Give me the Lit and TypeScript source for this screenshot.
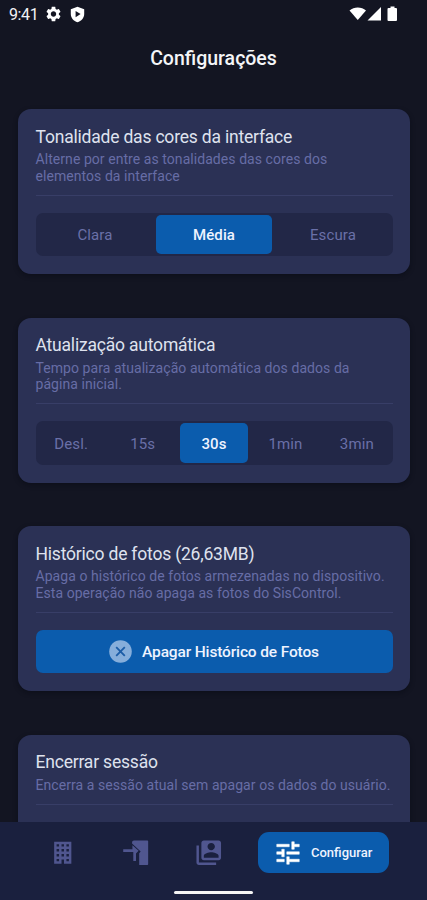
import { LitElement, html, css } from "lit";
import { customElement, property } from "lit/decorators.js";

@customElement("segmented-control")
class SegmentedControl extends LitElement {
  @property({ attribute: false }) options: string[] = [];
  @property({ type: Number }) selected = 0;

  static styles = css`
    .track {
      display: flex;
      box-sizing: border-box;
      height: 43.5px;
      padding: 2px 0;
      border-radius: 7px;
      background: #222747;
    }
    .option {
      flex: 1 1 0;
      display: flex;
      align-items: center;
      justify-content: center;
      box-sizing: border-box;
      margin: 0 1.75px;
      padding-top: 2px;
      border-radius: 5px;
      color: #6a70a8;
      font-size: 15px;
      letter-spacing: 0.12px;
    }
    .active {
      background: #0b5cad;
      color: #eef3ff;
      font-weight: 500;
    }
  `;

  render() {
    return html`<div class="track">
      ${this.options.map(
        (o, i) => html`<div class="option ${i === this.selected ? "active" : ""}">${o}</div>`
      )}
    </div>`;
  }
}

@customElement("settings-card")
class SettingsCard extends LitElement {
  @property() heading = "";
  @property({ attribute: false }) lines: string[] = [];

  static styles = css`
    :host {
      display: block;
      box-sizing: border-box;
      padding: 16px 17.5px 18px;
      border-radius: 13px;
      background: #2b3155;
      box-shadow: 0 2px 5px rgba(6, 8, 18, 0.45);
    }
    .heading {
      padding-top: 0.5px;
      font-size: 17.5px;
      line-height: 22px;
      letter-spacing: -0.2px;
      color: #dfe2ee;
      white-space: nowrap;
    }
    .description {
      margin-top: 3.5px;
      font-size: 14px;
      line-height: 16.5px;
      letter-spacing: 0.06px;
      color: #676da6;
      white-space: nowrap;
    }
    .rule {
      height: 1px;
      margin: 10.5px 0 17px;
      background: #383e67;
    }
  `;

  render() {
    return html`
      <div class="heading">${this.heading}</div>
      <div class="description">${this.lines.map((l) => html`<div>${l}</div>`)}</div>
      <div class="rule"></div>
      <slot></slot>
    `;
  }
}

@customElement("app-root")
class AppRoot extends LitElement {
  static styles = css`
    :host {
      display: flex;
      flex-direction: column;
      position: relative;
      box-sizing: border-box;
      width: 427px;
      height: 900px;
      overflow: hidden;
      background: #131522;
      font-family: Roboto, "Liberation Sans", sans-serif;
    }
    .status {
      flex: none;
      display: flex;
      align-items: center;
      height: 28px;
      padding: 0 28px 0 9px;
      color: #f2f2f5;
      font-size: 16px;
      letter-spacing: -0.4px;
    }
    .status svg { fill: #fff; }
    .gear { margin-left: 8px; }
    .shield { margin-left: 9px; }
    .signals {
      display: flex;
      align-items: center;
      margin-left: auto;
    }
    .title {
      flex: none;
      margin-top: 19px;
      height: 24px;
      line-height: 24px;
      text-align: center;
      font-size: 19.5px;
      font-weight: 500;
      color: #f4f5f8;
    }
    .content {
      flex: 1;
      min-height: 0;
      overflow: hidden;
      display: flex;
      flex-direction: column;
      gap: 43.5px;
      padding: 38px 17px 0 18px;
    }
    settings-card { flex: none; }
    .erase {
      display: flex;
      align-items: center;
      justify-content: center;
      gap: 10px;
      height: 43.5px;
      border-radius: 7px;
      background: #0b5cad;
      color: #eef3ff;
      font-size: 15.5px;
      font-weight: 500;
      letter-spacing: -0.14px;
    }
    .erase span { padding-top: 1px; }
    .filler { height: 43.5px; }
    .nav {
      flex: none;
      box-sizing: border-box;
      display: flex;
      flex-direction: column;
      align-items: center;
      height: 78px;
      padding-top: 10px;
      background: #1a203e;
    }
    .tabs {
      align-self: stretch;
      display: flex;
      align-items: center;
      height: 41px;
      padding: 0 38px 0 47.5px;
    }
    .tabs > svg { fill: #50568f; }
    .tabs > svg + svg { margin-left: 43.5px; }
    .tab-active {
      margin-left: auto;
      display: flex;
      align-items: center;
      gap: 8px;
      box-sizing: border-box;
      width: 131px;
      height: 41px;
      padding-left: 15px;
      border-radius: 11px;
      background: #0b5cad;
      color: #eef3ff;
      font-size: 13px;
      font-weight: 500;
    }
    .tab-active svg { fill: #fff; stroke: #fff; stroke-width: 0.4; }
    .home {
      width: 79px;
      height: 3px;
      margin-top: 18px;
      border-radius: 2px;
      background: #f4f4f4;
    }
  `;

  render() {
    return html`
      <div class="status">
        <span>9:41</span>
        <svg class="gear" width="15" height="16" viewBox="2 2 20 20"><path d="M19.14 12.94c.04-.3.06-.61.06-.94 0-.32-.02-.64-.07-.94l2.03-1.58c.18-.14.23-.41.12-.61l-1.92-3.32c-.12-.22-.37-.29-.59-.22l-2.39.96c-.5-.38-1.03-.7-1.62-.94l-.36-2.54c-.04-.24-.24-.41-.48-.41h-3.84c-.24 0-.43.17-.47.41l-.36 2.54c-.59.24-1.13.57-1.62.94l-2.39-.96c-.22-.08-.47 0-.59.22L2.74 8.87c-.12.21-.08.47.12.61l2.03 1.58c-.05.3-.09.63-.09.94s.02.64.07.94l-2.03 1.58c-.18.14-.23.41-.12.61l1.92 3.32c.12.22.37.29.59.22l2.39-.96c.5.38 1.03.7 1.62.94l.36 2.54c.05.24.24.41.48.41h3.84c.24 0 .44-.17.47-.41l.36-2.54c.59-.24 1.13-.56 1.62-.94l2.39.96c.22.08.47 0 .59-.22l1.92-3.32c.12-.22.07-.47-.12-.61l-2.01-1.58zM12 15.6c-1.98 0-3.6-1.62-3.6-3.6s1.62-3.6 3.6-3.6 3.6 1.62 3.6 3.6-1.62 3.6-3.6 3.6z"/></svg>
        <svg class="shield" width="15" height="17" viewBox="0 0 15 17"><path fill-rule="evenodd" d="M7.500 .7 14.200 3.200V8c0 4-2.900 7-6.700 8.300C3.700 15 .8 12 .8 8V3.200ZM5.600 5v6.200L10.600 8.100Z"/></svg>
        <div class="signals">
          <svg width="50" height="18" viewBox="0 0 50 18">
            <path d="M.5 5.500C5 1.600 12.500 1.600 17 5.500L8.750 15Z"/>
            <path d="M32 2V15.500H18.500Z"/>
            <path d="M41.500 1.500h4V3h1.500a1 1 0 0 1 1 1v11a1 1 0 0 1-1 1h-7.500a1 1 0 0 1-1-1v-11a1 1 0 0 1 1-1h2Z"/>
          </svg>
        </div>
      </div>
      <div class="title">Configurações</div>
      <div class="content">
        <settings-card
          heading="Tonalidade das cores da interface"
          .lines=${["Alterne por entre as tonalidades das cores dos", "elementos da interface"]}
        >
          <segmented-control .options=${["Clara", "Média", "Escura"]} .selected=${1}></segmented-control>
        </settings-card>
        <settings-card
          heading="Atualização automática"
          .lines=${["Tempo para atualização automática dos dados da", "página inicial."]}
        >
          <segmented-control
            .options=${["Desl.", "15s", "30s", "1min", "3min"]}
            .selected=${2}
          ></segmented-control>
        </settings-card>
        <settings-card
          heading="Histórico de fotos (26,63MB)"
          .lines=${["Apaga o histórico de fotos armezenadas no dispositivo.", "Esta operação não apaga as fotos do SisControl."]}
        >
          <div class="erase">
            <svg width="23" height="23" viewBox="0 0 23 23">
              <circle cx="11.500" cy="11.500" r="11.300" fill="#86aedb"/>
              <path d="M7.200 7.200l8.600 8.600M15.800 7.200l-8.600 8.600" stroke="#1b5ca6" stroke-width="1.800"/>
            </svg>
            <span>Apagar Histórico de Fotos</span>
          </div>
        </settings-card>
        <settings-card
          heading="Encerrar sessão"
          .lines=${["Encerra a sessão atual sem apagar os dados do usuário."]}
        >
          <div class="filler"></div>
        </settings-card>
      </div>
      <div class="nav">
        <div class="tabs">
          <svg width="29.500" height="29.500" viewBox="0 0 24 24"><path d="M5 3v18h6v-3.500h2V21h6V3H5m2 2h2v2H7V5m4 0h2v2h-2V5m4 0h2v2h-2V5M7 9h2v2H7V9m4 0h2v2h-2V9m4 0h2v2h-2V9m-8 4h2v2H7v-2m4 0h2v2h-2v-2m4 0h2v2h-2v-2m-8 4h2v2H7v-2m8 0h2v2h-2v-2z"/></svg>
          <svg width="29.500" height="29.500" viewBox="0 0 24 24">
            <path d="M10.500 2H21.500a.6.600 0 0 1 .6.600V21.400a.6.600 0 0 1-.6.600H14.800V12.500L16 11 9 4.500V3.500A1.500 1.500 0 0 1 10.500 2Z"/>
            <path d="M1.800 9.200H9.300V5.900L14.300 10.400 12.200 12.700V18.800H10V11.400H1.800Z"/>
          </svg>
          <svg width="29.500" height="29.500" viewBox="0 0 24 24"><path d="M4 6H2v14c0 1.100.9 2 2 2h14v-2H4V6zm16-4H8c-1.100 0-2 .9-2 2v12c0 1.100.9 2 2 2h12c1.100 0 2-.9 2-2V4c0-1.100-.9-2-2-2zm-6 2c1.660 0 3 1.340 3 3s-1.340 3-3 3-3-1.340-3-3 1.340-3 3-3zm6 12H8v-1.500c0-1.990 4-3 6-3s6 1.010 6 3V16z"/></svg>
          <div class="tab-active">
            <svg width="30" height="30" viewBox="0 0 24 24"><path d="M3 17v2h6v-2H3zM3 5v2h10V5H3zm10 16v-2h8v-2h-8v-2h-2v6h2zM7 9v2H3v2h4v2h2V9H7zm14 4v-2H11v2h10zm-6-4h2V7h4V5h-4V3h-2v6z"/></svg>
            <span>Configurar</span>
          </div>
        </div>
        <div class="home"></div>
      </div>
    `;
  }
}
